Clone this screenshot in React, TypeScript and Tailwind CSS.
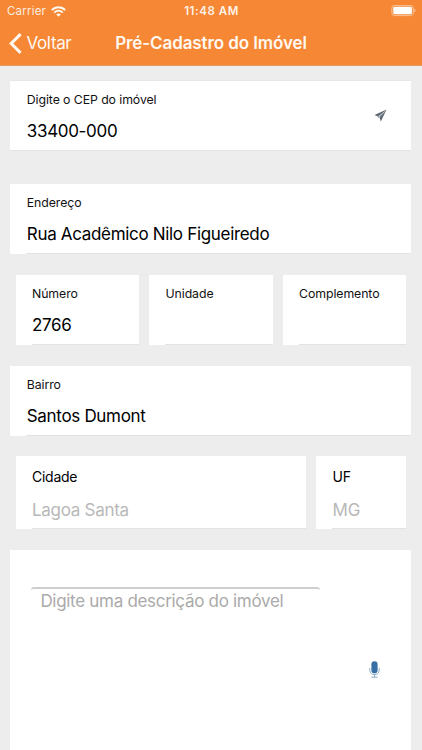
// Pré-Cadastro do Imóvel
// Header + address form + description box

type FieldProps = {
  label: string;
  value?: string;
  className?: string;
};

function StatusBar() {
  return (
    <div className="grid h-[22px] grid-cols-3 items-center pl-[7px] pr-[6px] text-[11.5px] leading-[22px]">
      <div className="flex items-center gap-[5px]">
        <span className="tracking-[0.2px] opacity-90">Carrier</span>
        <svg width="15" height="11" viewBox="0 0 15 11" fill="none" stroke="currentColor" strokeWidth="1.9">
          <path d="M0.8 4.1C4.5 0.3 10.5 0.3 14.2 4.1" />
          <path d="M3.2 6.6C5.7 4.2 9.3 4.2 11.8 6.6" />
          <path d="M5.2 8.4C6.5 7.3 8.5 7.3 9.8 8.4L7.5 10.8Z" fill="currentColor" stroke="none" />
        </svg>
      </div>
      <span className="text-center font-semibold tracking-[0.55px] opacity-95">11:48 AM</span>
      <svg className="justify-self-end" width="25" height="12" viewBox="0 0 25 12" fill="none">
        <rect x="0.9" y="0.4" width="21.4" height="10.2" rx="2.6" stroke="white" strokeOpacity="0.5" />
        <rect x="2.3" y="1.8" width="18.6" height="7.4" rx="1.4" fill="white" />
        <path d="M23.4 3.7C24.9 4.3 24.9 6.7 23.4 7.3Z" fill="white" fillOpacity="0.6" />
      </svg>
    </div>
  );
}

function Header() {
  return (
    <header className="h-[66px] border-b border-[#e59a62] bg-[#f58735] text-[#fff8f0]">
      <StatusBar />
      <div className="grid h-[43px] grid-cols-[108px_1fr_108px] items-center">
        <div className="flex items-center gap-[5px] pl-[8.5px]">
          <svg width="13" height="21" viewBox="0 0 13 21" fill="none" stroke="currentColor" strokeWidth="3">
            <path d="M11.6 1.1L2.2 10.5L11.6 19.9" />
          </svg>
          <span className="text-[17px] leading-none tracking-[-0.35px]">Voltar</span>
        </div>
        <h1 className="whitespace-nowrap text-center text-[17px] font-semibold leading-none tracking-[-0.1px]">
          Pré-Cadastro do Imóvel
        </h1>
      </div>
    </header>
  );
}

function FieldText({ label, value }: FieldProps) {
  return (
    <div className="flex-1 pl-[16.4px] pt-[11px]">
      <div className="text-[12.3px] leading-4 tracking-[-0.08px]">{label}</div>
      <div className="mt-[13px] text-[17px] leading-5 tracking-[-0.32px] text-black">{value}</div>
    </div>
  );
}

function Field({ label, value, className = '' }: FieldProps) {
  return (
    <div className={`flex h-[70px] flex-col bg-white ${className}`}>
      <FieldText label={label} value={value} />
      <div className="ml-4 h-px bg-[#e3e3e3]" />
    </div>
  );
}

function DisabledField({ label, value }: FieldProps) {
  return (
    <div className="flex h-[73px] flex-col bg-white">
      <div className="flex-1 pl-[16.4px] pt-[11px]">
        <div className="text-[14px] leading-5 tracking-[-0.25px] text-black">{label}</div>
        <div className="mt-[12.5px] text-[17px] leading-5 tracking-[-0.28px] text-[#b8b8b8]">{value}</div>
      </div>
      <div className="ml-4 h-px bg-[#e3e3e3]" />
    </div>
  );
}

export default function App() {
  return (
    <div className="flex h-[750px] w-[422px] flex-col overflow-hidden bg-[#ededed] font-['Inter',sans-serif] text-[#111]">
      <Header />
      <main className="flex flex-1 flex-col pl-[10.4px] pr-[10.6px] pt-[15px]">
        <div className="relative flex h-[70px] flex-col border-b border-[#e3e3e3] bg-white shadow-[0_-1px_0_#e6e6e6]">
          <FieldText label="Digite o CEP do imóvel" value="33400-000" />
          <svg className="absolute right-[24px] top-[27.5px]" width="13" height="13" viewBox="0 0 13 13" fill="#5b6670">
            <path d="M12.6 0.4L0.6 6L3.8 7.4L10 3Z" />
            <path d="M12.6 0.4L6.8 12.4L5.5 8.2L10.3 3.2Z" />
            <path d="M4.1 7.7L9.6 3.7L5 8.1L4.9 9.5Z" />
          </svg>
        </div>

        <Field label="Endereço" value="Rua Acadêmico Nilo Figueiredo" className="mt-[33px]" />

        <div className="mt-[21px] grid grid-cols-3 gap-[10px] px-[5.2px]">
          <Field label="Número" value="2766" />
          <Field label="Unidade" />
          <Field label="Complemento" />
        </div>

        <Field label="Bairro" value="Santos Dumont" className="mt-[21px]" />

        <div className="mt-[20.4px] grid grid-cols-[1fr_90px] gap-[10px] px-[5.2px]">
          <DisabledField label="Cidade" value="Lagoa Santa" />
          <DisabledField label="UF" value="MG" />
        </div>

        <div className="relative mt-[21px] flex-1 bg-white px-[20.5px] pt-[36.7px]">
          <div className="h-[3px] w-[289px] rounded-t-[3px] border-t-2 border-[#cecece]" />
          <div className="pl-[9.5px] text-[17px] leading-[22px] tracking-[-0.3px] text-[#aaa]">
            Digite uma descrição do imóvel
          </div>
          <svg className="absolute right-[31.5px] top-[110.5px]" width="11" height="17" viewBox="0 0 11 17" fill="none">
            <rect x="2.4" y="0.3" width="6.2" height="12" rx="3.1" fill="#366fa5" />
            <path d="M0.8 7V9.3C0.8 15 10.2 15 10.2 9.3V7M5.5 13.5V16M2.5 16.2H8.5" stroke="#7fa3c4" strokeWidth="0.9" />
          </svg>
        </div>
      </main>
    </div>
  );
}
